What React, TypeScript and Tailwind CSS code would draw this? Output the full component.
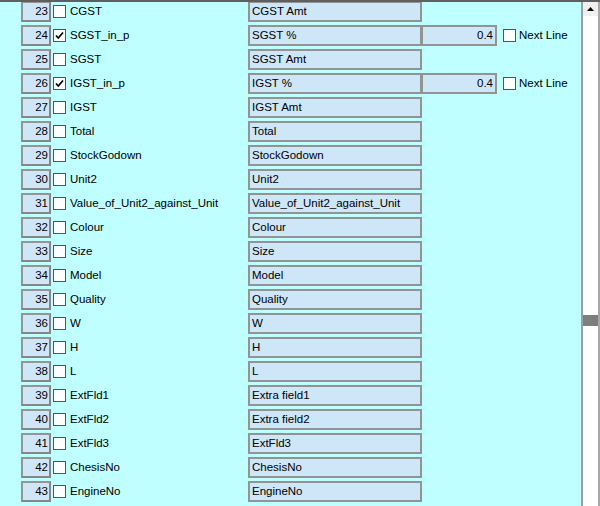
import React from "react";

type Row = { n: number; label: string; field: string; checked?: boolean; pct?: string };

const rows: Row[] = [
  { n: 23, label: "CGST", field: "CGST Amt" },
  { n: 24, label: "SGST_in_p", field: "SGST %", checked: true, pct: "0.4" },
  { n: 25, label: "SGST", field: "SGST Amt" },
  { n: 26, label: "IGST_in_p", field: "IGST %", checked: true, pct: "0.4" },
  { n: 27, label: "IGST", field: "IGST Amt" },
  { n: 28, label: "Total", field: "Total" },
  { n: 29, label: "StockGodown", field: "StockGodown" },
  { n: 30, label: "Unit2", field: "Unit2" },
  { n: 31, label: "Value_of_Unit2_against_Unit", field: "Value_of_Unit2_against_Unit" },
  { n: 32, label: "Colour", field: "Colour" },
  { n: 33, label: "Size", field: "Size" },
  { n: 34, label: "Model", field: "Model" },
  { n: 35, label: "Quality", field: "Quality" },
  { n: 36, label: "W", field: "W" },
  { n: 37, label: "H", field: "H" },
  { n: 38, label: "L", field: "L" },
  { n: 39, label: "ExtFld1", field: "Extra field1" },
  { n: 40, label: "ExtFld2", field: "Extra field2" },
  { n: 41, label: "ExtFld3", field: "ExtFld3" },
  { n: 42, label: "ChesisNo", field: "ChesisNo" },
  { n: 43, label: "EngineNo", field: "EngineNo" },
];

function Check({ checked }: { checked?: boolean }) {
  return (
    <div className="w-[13px] h-[13px] shrink-0 border-[1.5px] border-[#555555] bg-white flex items-center justify-center">
      {checked && (
        <svg width="9" height="9" viewBox="0 0 9 9">
          <path d="M1 4.5 L3.3 7 L8 1.5" fill="none" stroke="#000" strokeWidth="1.8" />
        </svg>
      )}
    </div>
  );
}

export default function App() {
  return (
    <div
      className="w-[600px] h-[506px] flex flex-col overflow-hidden bg-[#bfffff] text-black"
      style={{ fontFamily: '"Liberation Sans", Arial, sans-serif' }}
    >
      <div className="h-[2px] w-full bg-[#5f5f5f] shrink-0" />
      <div className="flex flex-1 min-h-0">
        <div className="flex-1 min-w-0 overflow-hidden">
          <div className="flex flex-col gap-[3px] -mt-[1px] pl-[21px] text-[11.5px]">
            {rows.map((r) => (
              <div key={r.n} className="flex items-center h-[21px] shrink-0">
                <div className="w-[30px] h-[21px] shrink-0 border-2 border-t-[#959595] border-l-[#959595] border-r-[#868686] border-b-[#868686] bg-[#cfe6f8] flex items-center justify-end pr-[1px] leading-none">
                  {r.n}
                </div>
                <div className="ml-[2px]">
                  <Check checked={r.checked} />
                </div>
                <div className="ml-[4px] w-[178px] shrink-0 leading-none whitespace-nowrap">{r.label}</div>
                <div className="w-[174px] h-[21px] shrink-0 border-2 border-[#939393] bg-[#cde6f8] flex items-center pl-[2px] leading-none whitespace-nowrap">
                  {r.field}
                </div>
                {r.pct && (
                  <>
                    <div className="-ml-[1px] w-[76px] h-[21px] shrink-0 border-2 border-[#939393] bg-[#cde6f8] flex items-center justify-end pr-[2px] leading-none">
                      {r.pct}
                    </div>
                    <div className="ml-[6px]">
                      <Check />
                    </div>
                    <div className="ml-[3px] leading-none whitespace-nowrap">Next Line</div>
                  </>
                )}
              </div>
            ))}
          </div>
        </div>
        <div className="w-[19px] shrink-0 flex flex-col bg-white border-l-2 border-[#a0a0a0] border-r-2 border-r-[#a8a8a8]">
          <div className="h-[14px] bg-[#f0f0f0] flex items-center justify-center">
            <svg width="7" height="4" viewBox="0 0 7 4">
              <path d="M0 4 L3.5 0 L7 4 Z" fill="#000" />
            </svg>
          </div>
          <div className="h-[299px]" />
          <div
            className="h-[11px] bg-[#7e7e7e]"
            style={{
              backgroundImage:
                "radial-gradient(circle, #a8a8a8 0.6px, transparent 0.7px)",
              backgroundSize: "2px 2px",
            }}
          />
        </div>
      </div>
    </div>
  );
}
